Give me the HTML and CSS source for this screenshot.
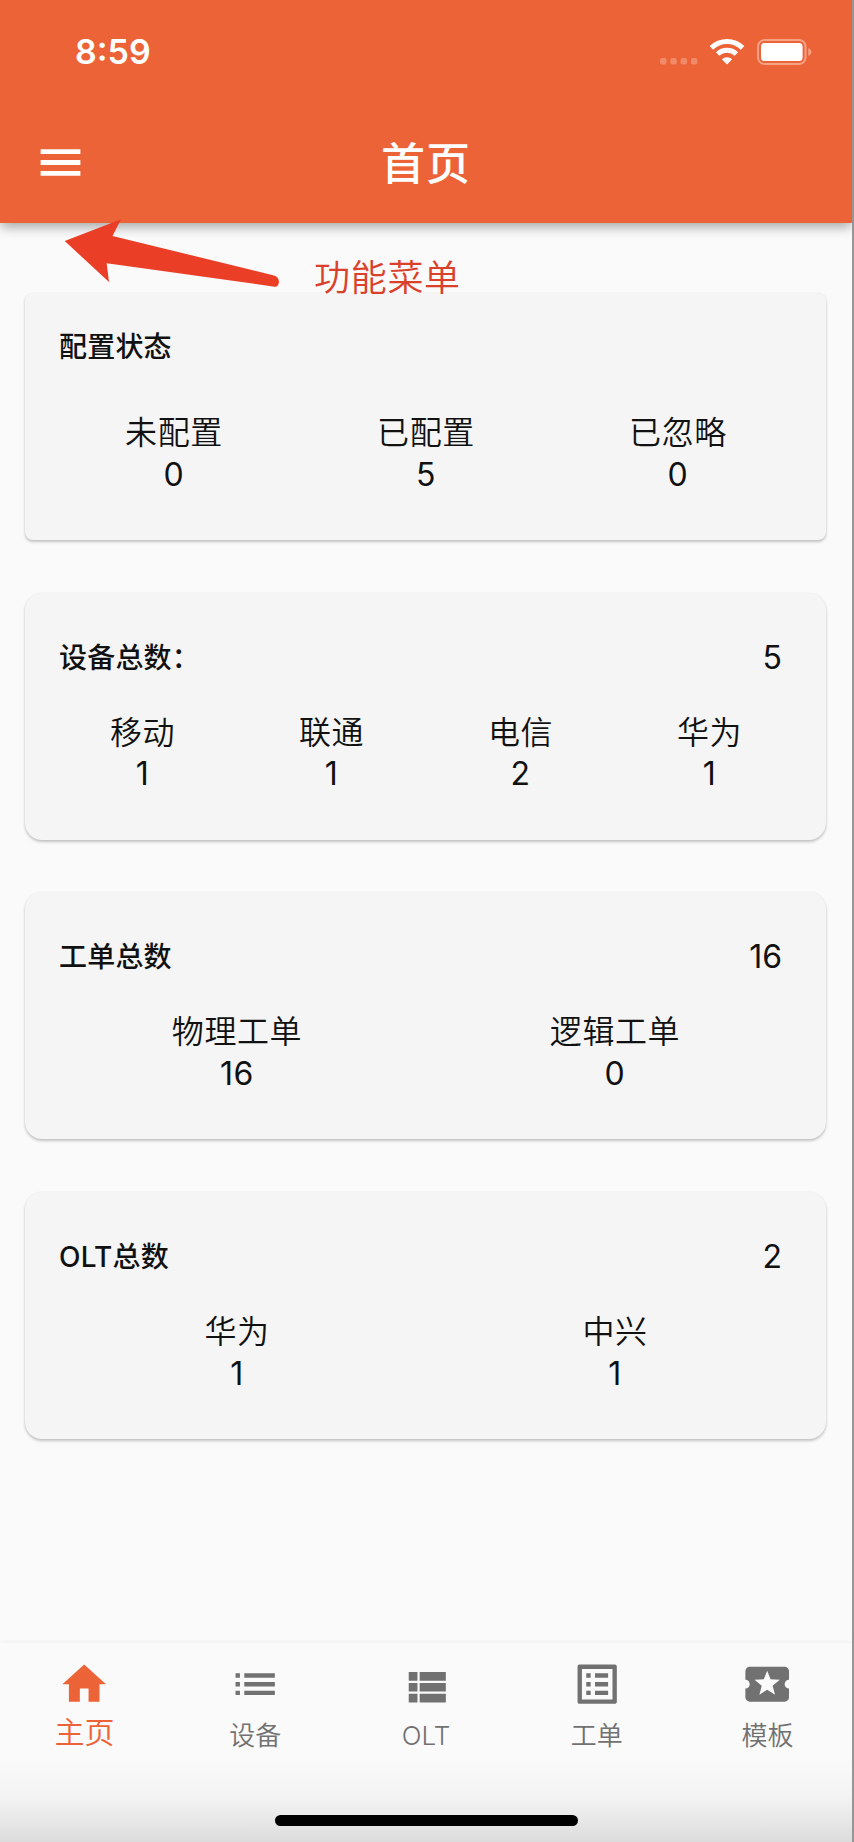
FILE: index.html
```
<!DOCTYPE html>
<html lang="zh-CN">
<head>
  <meta charset="utf-8" />
  <title>首页</title>
  <meta name="viewport" content="width=device-width, initial-scale=1" />
  <link rel="stylesheet" href="styles.css">
</head>

<body>
  <div class="wrapper">
    <header class="header">
      <div class="status-bar">
        <span class="time">8:59</span>
        <div class="status-icons">
          <svg class="signal" viewBox="0 0 38 26">
            <rect x="0" y="19" width="6.5" height="6.5" rx="2" />
            <rect x="10.3" y="19" width="6.5" height="6.5" rx="2" />
            <rect x="20.6" y="19" width="6.5" height="6.5" rx="2" />
            <rect x="30.9" y="19" width="6.5" height="6.5" rx="2" />
          </svg>
          <svg class="wifi" viewBox="0 0 36 27">
            <path d="M2.4 9.9a22.3 22.3 0 0 1 31.2 0M8.6 16a13.6 13.6 0 0 1 18.8 0" />
            <path class="wifi-dot" d="M18 26.4l-5.2-5.2a7.6 7.6 0 0 1 10.4 0z" />
          </svg>
          <svg class="battery" viewBox="0 0 56 26">
            <rect class="battery-frame" x="1" y="1" width="47.5" height="24" rx="6.5" />
            <rect class="battery-fill" x="4" y="4" width="41.6" height="18" rx="3.5" />
            <path class="battery-head" d="M51.3 9.2c4 1.2 4 6.4 0 7.6z" />
          </svg>
        </div>
      </div>
      <div class="app-bar">
        <svg class="menu" viewBox="0 0 24 24"><path d="M3 18h18v-2.1H3V18zm0-4.9h18v-2.2H3v2.2zM3 6v2.1h18V6H3z" /></svg>
        <h1>首页</h1>
      </div>
    </header>

    <!-- 功能菜单提示 -->
    <div class="tip">
      <svg class="arrow" viewBox="0 0 216 70"><path d="M.7 22L57 .3 48.5 17 210 56.4q5 1.8 5 6.6-.6 5.2-4.5 4.7L42.7 44.3 45 63z" /></svg>
      <span>功能菜单</span>
    </div>

    <main class="content">
      <section class="card card-status">
        <div class="card-title"><h2>配置状态</h2></div>
        <div class="card-row">
          <div class="item"><p>未配置</p><p class="num">0</p></div>
          <div class="item"><p>已配置</p><p class="num">5</p></div>
          <div class="item"><p>已忽略</p><p class="num">0</p></div>
        </div>
      </section>
      <section class="card">
        <div class="card-title"><h2>设备总数：</h2><span class="num">5</span></div>
        <div class="card-row">
          <div class="item"><p>移动</p><p class="num">1</p></div>
          <div class="item"><p>联通</p><p class="num">1</p></div>
          <div class="item"><p>电信</p><p class="num">2</p></div>
          <div class="item"><p>华为</p><p class="num">1</p></div>
        </div>
      </section>
      <section class="card">
        <div class="card-title"><h2>工单总数</h2><span class="num">16</span></div>
        <div class="card-row">
          <div class="item"><p>物理工单</p><p class="num">16</p></div>
          <div class="item"><p>逻辑工单</p><p class="num">0</p></div>
        </div>
      </section>
      <section class="card">
        <div class="card-title"><h2>OLT总数</h2><span class="num">2</span></div>
        <div class="card-row">
          <div class="item"><p>华为</p><p class="num">1</p></div>
          <div class="item"><p>中兴</p><p class="num">1</p></div>
        </div>
      </section>
    </main>

    <nav class="nav">
      <div class="nav-list">
        <a class="nav-item active">
          <svg viewBox="0 0 24 24"><path d="M10 20v-6h4v6h5v-8h3L12 3 2 12h3v8z" /></svg>
          <span>主页</span>
        </a>
        <a class="nav-item">
          <svg viewBox="0 0 24 24"><path d="M3 13h2v-2H3v2zm0 4h2v-2H3v2zm0-8h2V7H3v2zm4 4h14v-2H7v2zm0 4h14v-2H7v2zM7 7v2h14V7H7z" /></svg>
          <span>设备</span>
        </a>
        <a class="nav-item">
          <svg viewBox="0 0 24 24"><path d="M4 15.4h4v-4H4v4zm0 5h4v-4H4v4zm0-10h4v-4H4v4zm5 5h12v-4H9v4zm0 5h12v-4H9v4zm0-14v4h12v-4H9z" /></svg>
          <span>OLT</span>
        </a>
        <a class="nav-item">
          <svg viewBox="0 0 24 24"><path d="M19 5v14H5V5h14m1.1-2H3.9c-.5 0-.9.4-.9.9v16.2c0 .4.4.9.9.9h16.2c.4 0 .9-.5.9-.9V3.9c0-.5-.5-.9-.9-.9zM11 7h6v2h-6V7zm0 4h6v2h-6v-2zm0 4h6v2h-6v-2zM7 7h2v2H7V7zm0 4h2v2H7v-2zm0 4h2v2H7v-2z" /></svg>
          <span>工单</span>
        </a>
        <a class="nav-item">
          <svg viewBox="0 0 24 24"><path d="M20 12c0-1.1.9-2 2-2V6c0-1.1-.9-2-2-2H4c-1.1 0-1.99.9-1.99 2v4c1.1 0 1.99.9 1.99 2s-.89 2-2 2v4c0 1.1.9 2 2 2h16c1.1 0 2-.9 2-2v-4c-1.1 0-2-.9-2-2zm-4.42 4.8L12 14.5l-3.58 2.3 1.08-4.12-3.29-2.69 4.24-.25L12 5.8l1.54 3.95 4.24.25-3.29 2.69 1.09 4.11z" /></svg>
          <span>模板</span>
        </a>
      </div>
      <div class="home-indicator"></div>
    </nav>
  </div>
</body>
</html>
```
FILE: styles.css
```
* {
  box-sizing: border-box;
  padding: 0;
  margin: 0;
}

body {
  font-family: Inter, "Noto Sans CJK SC", sans-serif;
  color: #111;
  background-color: #fafafa;
}

.wrapper {
  position: relative;
  height: 1842px;
  width: 854px;
  display: flex;
  flex-direction: column;
  border-right: 2px solid #969696;
  overflow: hidden;
}

/* 顶部 */
.header {
  height: 223px;
  flex-shrink: 0;
  color: #fff;
  background-color: #ec6337;
  box-shadow: 0 5px 11px -1px rgba(0, 0, 0, 0.34);
}

.status-bar {
  height: 103px;
  padding: 0 39px 0 75px;
  display: flex;
  justify-content: space-between;
  align-items: center;
}

.time {
  font-size: 34px;
  font-weight: 600;
}

.status-icons {
  display: flex;
  align-items: center;
}

.signal {
  width: 38px;
  height: 26px;
  margin-right: 11px;
  fill: #f18a68;
}

.wifi {
  width: 36px;
  height: 27px;
  margin-right: 12px;
  fill: none;
  stroke: #fff;
  stroke-width: 5;
}

.wifi .wifi-dot {
  fill: #fff;
  stroke: none;
}

.battery {
  width: 56px;
  height: 26px;
}

.battery-frame {
  fill: none;
  stroke: #f6a284;
  stroke-width: 2;
}

.battery-fill {
  fill: #fff;
}

.battery-head {
  fill: #f6a284;
}

.app-bar {
  height: 118px;
  padding: 0 34px;
  display: grid;
  grid-template-columns: 53px 1fr 53px;
  align-items: center;
}

.menu {
  width: 53px;
  height: 53px;
  fill: #fff;
}

h1 {
  padding-bottom: 2px;
  font-size: 44px;
  font-weight: 500;
  letter-spacing: 1px;
  text-align: center;
}

/* 箭头和文字，盖在卡片上面 */
.tip {
  position: absolute;
  top: 219px;
  left: 64px;
  display: flex;
}

.arrow {
  width: 216px;
  height: 70px;
  fill: #ea3f26;
}

.tip span {
  margin: 37px 0 0 34px;
  font-size: 36px;
  font-weight: 350;
  letter-spacing: 0.7px;
  line-height: 44px;
  color: #d9412b;
}

/* 卡片 */
.content {
  flex: 1;
  padding: 70px 26px 0 25px;
}

.card {
  height: 247px;
  margin-bottom: 52.7px;
  padding: 44px 22px 0 23px;
  border-radius: 17px;
  background-color: #f5f5f5;
  box-shadow: 0 2px 3px rgba(0, 0, 0, 0.22), 0 0 2px rgba(0, 0, 0, 0.06);
}

.card-title {
  height: 75px;
  padding: 0 22px 0 11px;
  display: flex;
  justify-content: space-between;
  font-size: 32px;
  line-height: 41px;
}

.card-status {
  padding-top: 33px;
  border-radius: 8px;
}

.card-status .card-title {
  height: 86px;
}

h2 {
  font-size: 28px;
  font-weight: 500;
  letter-spacing: 0.2px;
  line-height: 42px;
}

.card-row {
  display: flex;
}

.item {
  flex: 1;
  font-size: 32px;
  font-weight: 350;
  letter-spacing: 0.6px;
  line-height: 41.5px;
  text-align: center;
}

.num {
  font-weight: 400;
}

/* 底部导航 */
.nav {
  height: 199px;
  display: flex;
  flex-direction: column;
  justify-content: space-between;
  align-items: center;
  background: linear-gradient(#fafafa 58%, #f3f3f3 78%, #dcdcdc);
  box-shadow: 0 -1px 4px rgba(0, 0, 0, 0.05);
}

.nav-list {
  width: 854px;
  padding-top: 15px;
  display: flex;
}

.nav-item {
  flex: 1;
  display: flex;
  flex-direction: column;
  align-items: center;
  font-size: 26px;
  font-weight: 350;
  line-height: 51px;
  color: #717171;
}

.nav-item svg {
  width: 52.4px;
  height: 52.4px;
  fill: #717171;
}

.nav-item.active {
  font-size: 30px;
  line-height: 45px;
  color: #ec6337;
}

.nav-item.active svg {
  fill: #ec6337;
}

.home-indicator {
  width: 303px;
  height: 11px;
  margin-bottom: 16px;
  border-radius: 6px;
  background-color: #000;
}
```
